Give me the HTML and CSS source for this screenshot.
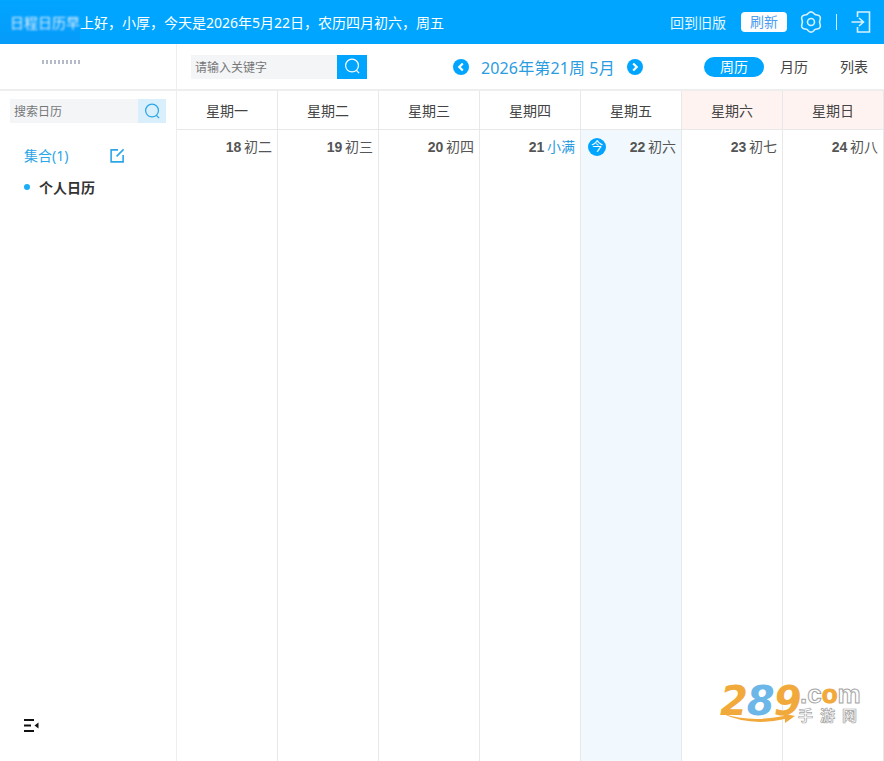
FILE: index.html
```html
<!DOCTYPE html>
<html>
<head>
    <meta charset="UTF-8">
    <title>日历</title>
    <link rel="stylesheet" href="styles.css">
</head>
<body>
    <header class="topbar">
        <div class="greeting">
            <span class="smudge-text">日程日历早</span><span>上好，小厚，今天是2026年5月22日，农历四月初六，周五</span>
        </div>
        <div class="smudge"></div>
        <div class="top-actions">
            <span class="old-link">回到旧版</span>
            <button class="refresh">刷新</button>
            <svg class="gear" viewBox="0 0 22 22" width="22" height="22">
                <path d="M8.300 2.300 Q11 -0.600 13.700 2.300 Q15 4.300 17.400 4 Q21.300 4.900 20.100 8.700 Q19 11 20.100 13.300 Q21.300 17.100 17.400 18 Q15 17.700 13.700 19.700 Q11 22.600 8.300 19.700 Q7 17.700 4.600 18 Q0.700 17.100 1.900 13.300 Q3 11 1.900 8.700 Q0.700 4.900 4.600 4 Q7 4.300 8.300 2.300 Z" fill="none" stroke="#d8f1ff" stroke-width="1.600"/>
                <circle cx="11" cy="11" r="3.500" fill="none" stroke="#d8f1ff" stroke-width="1.600"/>
            </svg>
            <span class="divider"></span>
            <svg class="logout" viewBox="0 0 20 22" width="20" height="22">
                <path d="M6.500 6 V1 H18.500 V21 H6.500 V16" fill="none" stroke="#d8f1ff" stroke-width="1.600"/>
                <path d="M0.500 11 H12 M8 7 L12.500 11 L8 15" fill="none" stroke="#d8f1ff" stroke-width="1.600"/>
            </svg>
        </div>
    </header>

    <div class="main">
        <aside class="sidebar">
            <div class="logo-area"><span class="logo-smudge"></span></div>
            <div class="side-search">
                <span class="side-search-text">搜索日历</span>
                <span class="side-search-btn">
                    <svg viewBox="0 0 18 18" width="17" height="17">
                        <circle cx="8.500" cy="8" r="6.800" fill="none" stroke="#2ba6e6" stroke-width="1.300"/>
                        <path d="M13 13 L16 16" stroke="#2ba6e6" stroke-width="1.300"/>
                    </svg>
                </span>
            </div>
            <div class="collection">
                <span class="collection-name">集合(1)</span>
                <svg viewBox="0 0 16 16" width="15" height="15">
                    <path d="M8.500 2 H1.200 V14.800 H14 V7.500" fill="none" stroke="#2ba6e6" stroke-width="1.700"/>
                    <path d="M7 9 L14.500 1.500" stroke="#2ba6e6" stroke-width="1.700"/>
                </svg>
            </div>
            <div class="calendar-item"><span class="dot"></span>个人日历</div>
            <div class="side-bottom">
                <svg viewBox="0 0 15 13" width="15" height="13">
                    <path d="M0 1 H10 M0 6.500 H7 M0 12 H10" stroke="#111" stroke-width="2"/>
                    <path d="M14.500 3.500 V9.500 L10.500 6.500 Z" fill="#111"/>
                </svg>
            </div>
        </aside>

        <section class="content">
            <div class="toolbar">
                <div class="key-search">
                    <span class="key-search-text">请输入关键字</span>
                    <span class="key-search-btn">
                        <svg viewBox="0 0 18 18" width="17" height="17">
                            <circle cx="8.500" cy="8" r="6.800" fill="none" stroke="#fff" stroke-width="1.300"/>
                            <path d="M13 13 L16 16" stroke="#fff" stroke-width="1.300"/>
                        </svg>
                    </span>
                </div>
                <div class="week-nav">
                    <svg viewBox="0 0 16 16" width="16" height="16">
                        <circle cx="8" cy="8" r="8" fill="#00a5ff"/>
                        <path d="M9.800 4.500 L6.300 8 L9.800 11.500" fill="none" stroke="#fff" stroke-width="2.200"/>
                    </svg>
                    <span class="week-title">2026年第21周 5月</span>
                    <svg viewBox="0 0 16 16" width="16" height="16">
                        <circle cx="8" cy="8" r="8" fill="#00a5ff"/>
                        <path d="M6.200 4.500 L9.700 8 L6.200 11.500" fill="none" stroke="#fff" stroke-width="2.200"/>
                    </svg>
                </div>
                <div class="view-tabs">
                    <span class="tab active">周历</span>
                    <span class="tab">月历</span>
                    <span class="tab">列表</span>
                </div>
            </div>

            <div class="week-head">
                <div class="head-cell">星期一</div>
                <div class="head-cell">星期二</div>
                <div class="head-cell">星期三</div>
                <div class="head-cell">星期四</div>
                <div class="head-cell">星期五</div>
                <div class="head-cell weekend">星期六</div>
                <div class="head-cell weekend">星期日</div>
            </div>

            <div class="week-body">
                <div class="day"><b>18</b> 初二</div>
                <div class="day"><b>19</b> 初三</div>
                <div class="day"><b>20</b> 初四</div>
                <div class="day"><b>21</b> <span class="term">小满</span></div>
                <div class="day today"><span class="today-mark">今</span><b>22</b> 初六</div>
                <div class="day"><b>23</b> 初七</div>
                <div class="day"><b>24</b> 初八</div>
            </div>
        </section>
    </div>

    <div class="watermark">
        <span class="wm-num">2<span class="wm-blue">8</span>9</span>
        <span class="wm-com">.c<span class="wm-o">o</span>m</span>
        <span class="wm-cn">手游网</span>
        <svg class="wm-swoosh" viewBox="0 0 76 12" width="76" height="12">
            <path d="M1 1 Q30 11 64 4 L61 1 L75 4 L65 11 L65 7 Q30 15 1 1 Z" fill="#f2a93b"/>
        </svg>
    </div>
</body>
</html>
```

FILE: styles.css
```css
* {
    box-sizing: border-box;
}

html, body {
    height: 100%;
}

body {
    margin: 0;
    height: 761px;
    overflow: hidden;
    position: relative;
    display: flex;
    flex-direction: column;
    font-family: "Noto Sans", "Noto Sans CJK SC", sans-serif;
    font-size: 14px;
    color: #444;
    background: #fff;
}

.topbar {
    height: 44px;
    flex: none;
    display: flex;
    align-items: center;
    justify-content: space-between;
    background: #00a5ff;
    color: #fff;
    padding-right: 13px;
}

.greeting {
    font-size: 14px;
    white-space: nowrap;
    padding-left: 10px;
}

.smudge-text {
    filter: blur(0.8px);
}

.smudge {
    position: absolute;
    left: 0;
    top: 0;
    width: 80px;
    height: 44px;
    background: linear-gradient(to bottom, rgba(30, 120, 230, 0), rgba(30, 120, 230, 0.22));
}

.top-actions {
    display: flex;
    align-items: center;
}

.old-link {
    color: #e4f6ff;
    margin-right: 15px;
}

.refresh {
    width: 46px;
    height: 20px;
    padding: 0;
    border: none;
    border-radius: 4px;
    background: #fff;
    color: #4d9df0;
    font-family: inherit;
    font-size: 14px;
    line-height: 20px;
}

.gear {
    margin-left: 13px;
}

.divider {
    width: 1px;
    height: 16px;
    background: #d8f1ff;
    margin: 0 14px;
}

.main {
    flex: 1;
    display: flex;
    min-height: 0;
}

.sidebar {
    width: 177px;
    flex: none;
    display: flex;
    flex-direction: column;
    border-right: 1px solid #eee;
}

.logo-area {
    height: 47px;
    flex: none;
    border-bottom: 2px solid #eee;
}

.logo-smudge {
    display: block;
    width: 40px;
    height: 4px;
    margin: 16px 0 0 42px;
    background: repeating-linear-gradient(to right, #b4bcc8 0 2px, #fff 2px 4px);
    filter: blur(0.7px);
}

.side-search {
    display: flex;
    align-items: center;
    justify-content: space-between;
    height: 24px;
    margin: 8px 10px 0;
    background: #f3f5f7;
}

.side-search-text {
    padding-left: 4px;
    font-size: 12px;
    color: #777;
}

.side-search-btn {
    width: 28px;
    height: 24px;
    display: flex;
    align-items: center;
    justify-content: center;
    background: #d9effc;
}

.collection {
    display: flex;
    align-items: center;
    gap: 42px;
    margin: 22px 0 0 24px;
    height: 20px;
}

.collection-name {
    color: #2ba6e6;
}

.calendar-item {
    display: flex;
    align-items: center;
    margin: 12px 0 0 24px;
    height: 20px;
    font-size: 14px;
    font-weight: 700;
    color: #333;
}

.dot {
    width: 6px;
    height: 6px;
    margin-right: 9px;
    border-radius: 50%;
    background: #19aef5;
}

.side-bottom {
    margin-top: auto;
    padding: 0 0 29px 24px;
    line-height: 0;
}

.content {
    flex: 1;
    min-width: 0;
    display: flex;
    flex-direction: column;
}

.toolbar {
    height: 47px;
    flex: none;
    display: flex;
    align-items: center;
    padding-left: 14px;
    border-bottom: 2px solid #eee;
}

.key-search {
    width: 176px;
    height: 24px;
    display: flex;
    align-items: center;
    justify-content: space-between;
    background: #f3f5f7;
}

.key-search-text {
    padding-left: 4px;
    font-size: 12px;
    color: #777;
}

.key-search-btn {
    width: 30px;
    height: 24px;
    display: flex;
    align-items: center;
    justify-content: center;
    background: #00a5ff;
}

.week-nav {
    display: flex;
    align-items: center;
    gap: 12px;
    margin-left: 86px;
    color: #2b9ce0;
}

.week-title {
    font-size: 16px;
    letter-spacing: 0.13px;
    white-space: nowrap;
}

.view-tabs {
    display: flex;
    align-items: center;
    margin-left: auto;
}

.tab {
    width: 60px;
    height: 20px;
    line-height: 20px;
    text-align: center;
    font-size: 14px;
    color: #444;
}

.tab.active {
    border-radius: 10px;
    background: #00a5ff;
    color: #fff;
}

.week-head {
    height: 39px;
    flex: none;
    display: grid;
    grid-template-columns: repeat(7, 101px);
    border-bottom: 1px solid #e8e8e8;
}

.head-cell {
    display: flex;
    align-items: center;
    justify-content: center;
    border-right: 1px solid #e8e8e8;
    color: #444;
}

.head-cell.weekend {
    background: #fff3f1;
}

.week-body {
    flex: 1;
    display: grid;
    grid-template-columns: repeat(7, 101px);
}

.day {
    padding: 7px 5px 0 0;
    text-align: right;
    border-right: 1px solid #e8e8e8;
    color: #555;
    line-height: 20px;
    word-spacing: -1px;
    position: relative;
}

.day b {
    font-family: "Liberation Sans", sans-serif;
}

.day.today {
    background: #f2f9fe;
}

.term {
    color: #2b9ce0;
}

.today-mark {
    position: absolute;
    left: 7px;
    top: 8px;
    width: 18px;
    height: 18px;
    border-radius: 50%;
    background: #00a5ff;
    color: #fff;
    font-size: 12px;
    line-height: 18px;
    text-align: center;
}

.watermark {
    position: absolute;
    left: 720px;
    top: 680px;
    width: 145px;
    height: 45px;
}

.wm-num {
    position: absolute;
    left: 0;
    top: 3px;
    font-family: "DejaVu Sans", sans-serif;
    font-weight: 700;
    font-style: italic;
    font-size: 40px;
    line-height: 36px;
    letter-spacing: -1px;
    color: #f2a93b;
}

.wm-blue {
    color: #6cb6e8;
}

.wm-com {
    position: absolute;
    left: 80px;
    top: 3px;
    font-family: "Liberation Sans", sans-serif;
    font-size: 26px;
    font-weight: 700;
    line-height: 22px;
    color: #fff;
    -webkit-text-stroke: 1px #a5a5a5;
}

.wm-o {
    color: #f2a93b;
    -webkit-text-stroke: 1px #f2a93b;
}

.wm-cn {
    position: absolute;
    left: 78px;
    top: 28px;
    font-size: 15px;
    font-weight: 700;
    line-height: 15px;
    letter-spacing: 7px;
    white-space: nowrap;
    color: #fff;
    -webkit-text-stroke: 0.7px #a5a5a5;
}

.wm-swoosh {
    position: absolute;
    left: 0;
    top: 32px;
}
```
